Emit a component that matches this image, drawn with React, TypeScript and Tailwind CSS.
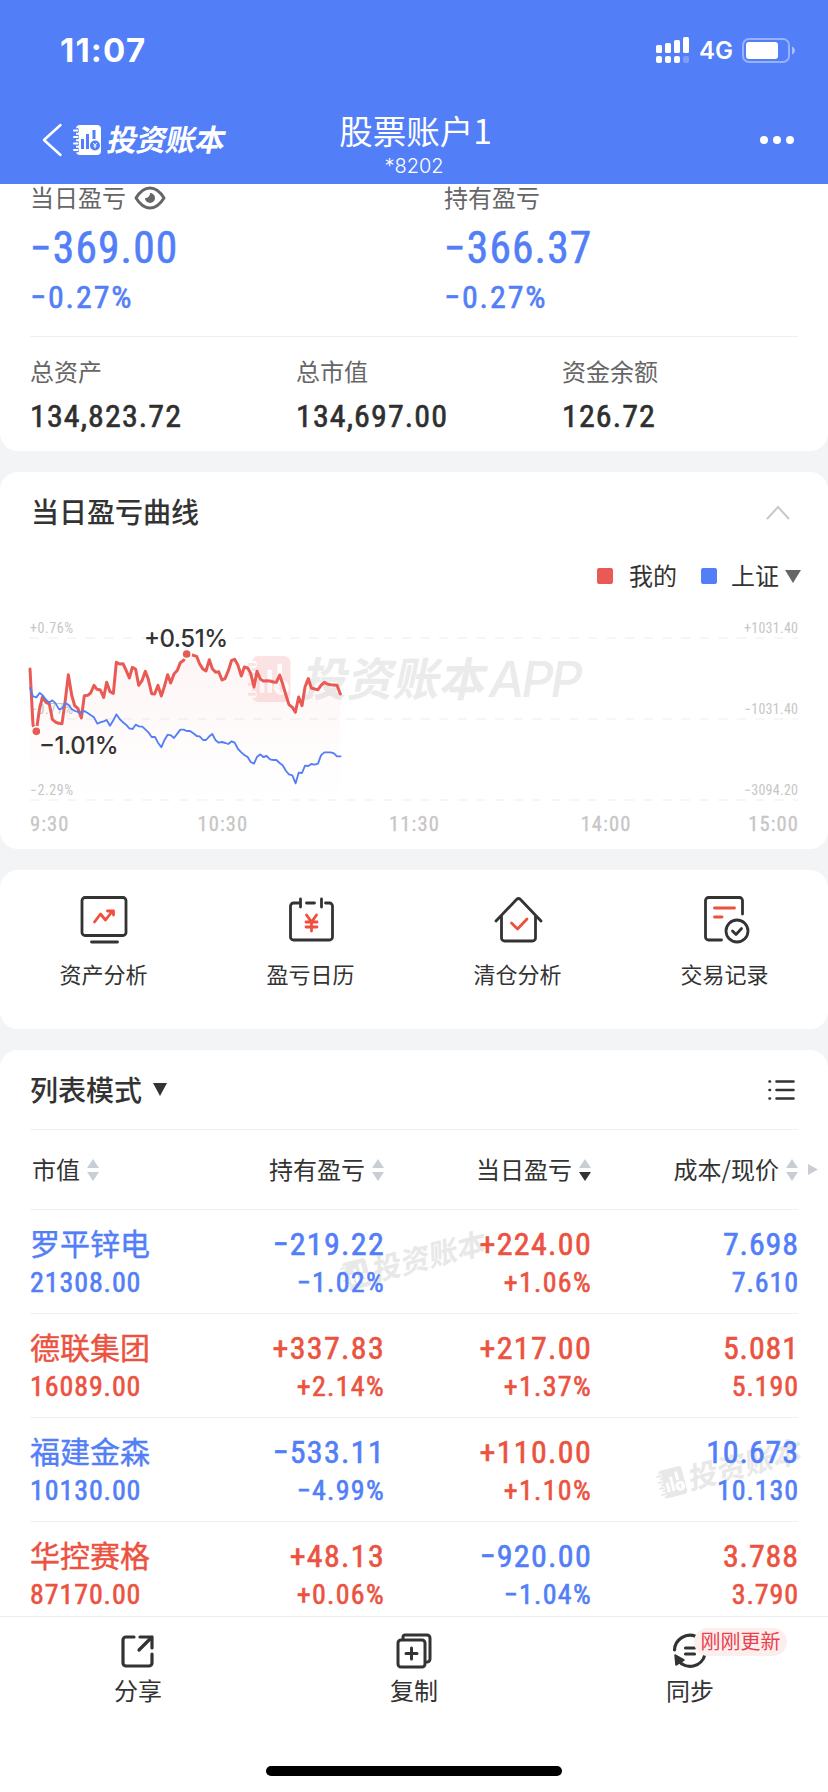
import React from 'react';

type Tone = 'up' | 'down';

interface Holding {
  name: string;
  value: string;
  tone: Tone;
  hold: [string, string, Tone];
  today: [string, string, Tone];
  price: [string, string];
}

const holdings: Holding[] = [
  { name: '罗平锌电', value: '21308.00', tone: 'down', hold: ['−219.22', '−1.02%', 'down'], today: ['+224.00', '+1.06%', 'up'], price: ['7.698', '7.610'] },
  { name: '德联集团', value: '16089.00', tone: 'up', hold: ['+337.83', '+2.14%', 'up'], today: ['+217.00', '+1.37%', 'up'], price: ['5.081', '5.190'] },
  { name: '福建金森', value: '10130.00', tone: 'down', hold: ['−533.11', '−4.99%', 'down'], today: ['+110.00', '+1.10%', 'up'], price: ['10.673', '10.130'] },
  { name: '华控赛格', value: '87170.00', tone: 'up', hold: ['+48.13', '+0.06%', 'up'], today: ['−920.00', '−1.04%', 'down'], price: ['3.788', '3.790'] },
];

const toneClass: Record<Tone, string> = {
  up: 'text-[#ec5240]',
  down: 'text-[#527ef7]',
};

// narrow digits, a touch heavier than regular
const numClass = "font-['Roboto'] font-normal [font-stretch:75%] [-webkit-text-stroke:0.6px_currentColor]";

const minePoints =
  '90,177 99,345 109,364 118,300 127,262 138,277 148,282 157,328 166,336 176,340 186,341 196,270 205,194 215,255 224,287 234,296 244,324 253,257 263,256 272,249 282,226 291,238 301,240 311,262 320,217 330,245 340,250 349,157 359,162 369,161 378,180 388,204 397,172 407,178 416,226 426,212 436,184 445,208 455,251 464,252 474,226 484,258 493,230 503,194 512,219 522,192 532,181 541,158 551,151 560,132 570,134 580,136 590,139 599,162 608,176 618,183 628,149 637,176 647,187 656,185 666,210 675,206 685,182 695,151 704,148 714,166 724,198 733,171 743,174 752,190 762,231 771,184 781,207 790,213 800,212 810,213 820,216 829,217 839,195 848,222 858,256 867,284 877,292 886,307 896,261 906,287 915,231 925,206 934,234 944,237 954,239 963,226 973,217 982,222 992,224 1002,225 1011,226 1021,252';

const marketPoints =
  '90,234 99,259 109,262 119,249 128,256 137,268 147,278 157,271 167,280 177,298 187,295 196,279 206,285 215,297 225,303 234,306 244,308 253,303 263,309 273,316 282,322 292,341 301,337 311,334 320,330 330,347 340,331 349,313 359,327 369,337 378,344 388,355 398,357 407,344 417,349 427,350 436,358 446,368 455,381 465,381 474,398 484,412 493,391 503,374 513,376 522,384 532,371 541,359 551,359 560,363 570,363 580,370 590,378 599,379 609,390 618,390 628,379 637,372 647,391 656,398 666,396 676,399 685,402 695,394 704,398 714,417 724,427 733,435 743,441 752,456 762,461 771,441 781,433 790,441 800,438 810,448 820,450 829,450 839,459 848,466 858,483 867,493 877,496 887,520 896,488 906,489 915,467 925,468 934,462 944,464 954,461 963,436 973,427 982,427 992,427 1002,430 1011,439 1022,439';

const BookLogo: React.FC<{ className?: string; hole: string }> = ({ className, hole }) => (
  <svg viewBox="0 0 28 30" className={className}>
    <rect x="3" y="0" width="25" height="30" rx="4" fill="currentColor" />
    {[5.5, 12, 18.5, 25].map(y => (
      <g key={y}>
        <rect x="2.5" y={y - 2.4} width="3.5" height="4.8" rx="2" fill={hole} />
        <rect x="0" y={y - 1} width="5.6" height="2" rx="1" fill="currentColor" />
      </g>
    ))}
    <path d="M9.5 14v10M14.5 9v15M21 5v9" stroke={hole} strokeWidth="3" />
    <circle cx="22" cy="20.5" r="5" fill={hole} />
    <path d="M20.3 18l1.7 2.4 1.7-2.4M22 20.4v3M20.4 21h3.2" stroke="currentColor" strokeWidth="1" fill="none" />
  </svg>
);

const BrandName: React.FC<{ className?: string }> = ({ className = '' }) => (
  <span className={`inline-block -skew-x-12 font-bold whitespace-nowrap ${className}`}>投资账本</span>
);

const Watermark: React.FC<{ className?: string }> = ({ className = '' }) => (
  <div className={`absolute flex items-center gap-[5px] -rotate-[14.5deg] text-[#e8e8e8] ${className}`}>
    <BookLogo className="w-[27px] h-[29px]" hole="#fff" />
    <BrandName className="text-[29px] leading-[30px] pb-[3px]" />
  </div>
);

const SortIcon: React.FC<{ active?: boolean }> = ({ active }) => (
  <svg width="12" height="22" viewBox="0 0 12 22">
    <path d="M6 0l6 9H0z" fill="#c8ced4" />
    <path d="M6 22l6-9H0z" fill={active ? '#333' : '#c8ced4'} />
  </svg>
);

const StatusBar = () => (
  <div className="h-[98px] flex items-center justify-between pl-[60px] pr-[33px] pt-[2px]">
    <span className="font-['Inter'] font-bold text-[33px] leading-none tracking-[1.2px]">11:07</span>
    <div className="flex items-center">
      <svg width="33" height="26" viewBox="0 0 33 26" fill="#fff">
        <rect x="0" y="8" width="6" height="8" rx="1.5" />
        <rect x="9" y="6" width="6" height="10" rx="1.5" />
        <rect x="18" y="3" width="6" height="13" rx="1.5" />
        <rect x="27" y="0" width="6" height="16" rx="1.5" />
        <rect x="0" y="19" width="6" height="7" rx="2" />
        <rect x="9" y="19" width="6" height="7" rx="2" />
        <rect x="18" y="19" width="6" height="7" rx="2" />
        <rect x="27" y="19" width="6" height="7" rx="2" opacity=".25" />
      </svg>
      <span className="ml-[10px] w-[43px] font-['Inter'] font-semibold text-[24px] leading-none pt-[2px]">4G</span>
      <svg width="53" height="25" viewBox="0 0 53 25">
        <rect x="1" y="1" width="46" height="23" rx="6" fill="none" stroke="#fff" strokeOpacity=".4" strokeWidth="2" />
        <rect x="4" y="4" width="32" height="17" rx="3" fill="#fff" />
        <path d="M50 8.5c4 1.5 4 6.500 0 8z" fill="#fff" opacity=".5" />
      </svg>
    </div>
  </div>
);

const Header = () => (
  <header className="h-[184px] bg-[#527ef7] text-white">
    <StatusBar />
    <div className="h-[86px] grid grid-cols-3">
      <div className="flex items-center pl-[41px] pb-[2px]">
        <svg width="22" height="34" viewBox="0 0 22 34" fill="none" stroke="#fff" strokeWidth="2.5" strokeLinecap="round" strokeLinejoin="round">
          <path d="M19.500 2L3 17l16.500 15" />
        </svg>
        <BookLogo className="w-[28px] h-[30px] ml-[10px]" hole="#527ef7" />
        <BrandName className="text-[30px] leading-none ml-[7px] pb-[4px] tracking-[-0.7px]" />
      </div>
      <div className="flex flex-col items-center pt-[12px]">
        <h1 className="text-[33.500px] leading-[40px] font-normal pl-[3px]">股票账户1</h1>
        <span className="font-['Inter'] font-light text-[20px] leading-[24px] mt-[4px]">*8202</span>
      </div>
      <div className="flex items-center justify-end gap-[5px] pr-[34px] pb-[2px]">
        <i className="size-2 rounded-full bg-white" />
        <i className="size-2 rounded-full bg-white" />
        <i className="size-2 rounded-full bg-white" />
      </div>
    </div>
  </header>
);

const Profit: React.FC<{ label: string; value: string; rate: string; eye?: boolean }> = ({ label, value, rate, eye }) => (
  <div className="text-[#527ef7]">
    <div className="flex items-center h-[28px] text-[24px] text-[#666]">
      <span className="pb-[3px]">{label}</span>
      {eye && (
        <svg width="32" height="24" viewBox="0 0 32 24" className="ml-[8px]" fill="none" stroke="#666">
          <path d="M2 12C6 5.500 10.500 2 16 2s10 3.500 14 10c-4 6.500-8.500 10-14 10S6 18.500 2 12z" strokeWidth="3" strokeLinejoin="round" />
          <path d="M16 7a5 5 0 1 1-5 5c3 0 5-1.500 5-5z" fill="#666" stroke="none" />
        </svg>
      )}
    </div>
    <div className={`${numClass} text-[43.500px] leading-[52px] mt-[11px] tracking-[1.1px]`}>{value}</div>
    <div className={`${numClass} text-[32px] leading-[36px] mt-[4px] tracking-[1.9px]`}>{rate}</div>
  </div>
);

const Total: React.FC<{ label: string; value: string }> = ({ label, value }) => (
  <div>
    <div className="text-[24px] leading-[30px] text-[#666]">{label}</div>
    <div className={`${numClass} text-[32px] leading-[36px] mt-[12px] tracking-[1.1px] text-[#2f2f2f]`}>{value}</div>
  </div>
);

const Summary = () => (
  <section className="h-[267px] bg-white rounded-b-[18px] px-[30px]">
    <div className="grid grid-cols-2 gap-[60px] h-[153px] border-b border-[#efefef]">
      <Profit label="当日盈亏" value="−369.00" rate="−0.27%" eye />
      <Profit label="持有盈亏" value="−366.37" rate="−0.27%" />
    </div>
    <div className="flex pt-[19px] [&>div]:w-[266px] [&>div]:shrink-0">
      <Total label="总资产" value="134,823.72" />
      <Total label="总市值" value="134,697.00" />
      <Total label="资金余额" value="126.72" />
    </div>
  </section>
);

const Chart = () => (
  <div className="relative h-[202px]">
    <div className="absolute left-[247px] top-[43px] flex items-center text-[#ebebeb]">
      <BookLogo className="w-[44px] h-[46px] text-[#fbe3e3]" hole="#fff" />
      <BrandName className="text-[46px] leading-[46px] ml-[13px] pb-[5px]" />
      <span className="ml-[1px] font-['Inter'] italic font-medium text-[50px] leading-[46px] tracking-[-3px]">APP</span>
    </div>
    <svg width="828" height="202" viewBox="0 0 828 202" className="relative block">
      <defs>
        <linearGradient id="mineFill" x1="0" y1="40" x2="0" y2="190" gradientUnits="userSpaceOnUse">
          <stop offset="0" stopColor="#e85a53" stopOpacity=".06" />
          <stop offset="1" stopColor="#e85a53" stopOpacity="0" />
        </linearGradient>
      </defs>
      <g stroke="#f3f3f3" strokeWidth="1.500" strokeDasharray="9.300 9.300">
        <path d="M30 28h768M30 109h768M30 190h768" />
      </g>
      <g fontFamily="Roboto" fontSize="14" fill="#c6c6c6" className="[font-stretch:75%]">
        <text x="30" y="23" textLength="43">+0.76%</text>
        <text x="30" y="104" textLength="43">−0.77%</text>
        <text x="30" y="185" textLength="43">−2.29%</text>
        <g textAnchor="end">
          <text x="798" y="23" textLength="54">+1031.40</text>
          <text x="798" y="104" textLength="54">−1031.40</text>
          <text x="798" y="185" textLength="54">−3094.20</text>
        </g>
      </g>
      <polygon points={`30,190 ${minePoints.split(' ').map(p => p.split(',').map(n => Number(n) / 3).join(',')).join(' ')} 340.500,190`} fill="url(#mineFill)" />
      <g transform="scale(.33333)" fill="none" strokeLinejoin="round" strokeLinecap="round">
        <polyline points={minePoints} stroke="#e85a53" strokeWidth="9" />
        <polyline points={marketPoints} stroke="#527ef7" strokeWidth="5.500" />
        <g fill="#e85a53" stroke="#fff" strokeWidth="5">
          <circle cx="109" cy="364" r="14" />
          <circle cx="560" cy="132" r="14" />
        </g>
      </g>
      <g fontFamily="Inter" fontSize="24" fontWeight="500" fill="#333">
        <text x="144" y="36.500" textLength="84">+0.51%</text>
        <text x="39" y="144" textLength="79.500">−1.01%</text>
      </g>
    </svg>
  </div>
);

const CurveCard = () => (
  <section className="h-[377px] mt-[21px] bg-white rounded-[18px] overflow-hidden">
    <div className="h-[80px] flex items-center justify-between pl-[31px] pr-[38px]">
      <h2 className="text-[28px] font-medium pb-[2px]">当日盈亏曲线</h2>
      <svg width="24" height="15" viewBox="0 0 24 15" fill="none" stroke="#c8c8c8" strokeWidth="2">
        <path d="M1 14L12 2l11 12" />
      </svg>
    </div>
    <div className="h-[58px] flex items-center justify-end pr-[27px] pb-[10px] text-[24px]">
      <i className="size-4 rounded-[2px] bg-[#e85a53]" />
      <span className="ml-[16px] pb-[3px]">我的</span>
      <i className="size-4 rounded-[2px] bg-[#527ef7] ml-[24px]" />
      <span className="ml-[14px] pb-[3px]">上证</span>
      <svg width="16" height="13" viewBox="0 0 16 13" className="ml-[6px]">
        <path d="M0 0h16L8 13z" fill="#666" />
      </svg>
    </div>
    <Chart />
    <div className="flex justify-between pl-[30px] pr-[29px] font-['Roboto'] [font-stretch:75%] [-webkit-text-stroke:0.3px_currentColor] tracking-[1.1px] text-[20.500px] leading-[24px] text-[#c6c6c6]">
      <span className="w-[72px]">9:30</span>
      <span className="w-[96px]">10:30</span>
      <span>11:30</span>
      <span className="w-[96px] text-right">14:00</span>
      <span className="w-[72px] text-right">15:00</span>
    </div>
  </section>
);

const tools = [
  {
    label: '资产分析',
    icon: (
      <>
        <rect x="1.500" y="2.500" width="44" height="38" rx="3" />
        <path d="M11 47h26" />
        <path d="M14 27l6-8 5 6 7-9M27 16h6v4" stroke="#f04f3e" />
      </>
    ),
  },
  {
    label: '盈亏日历',
    icon: (
      <>
        <path d="M11 8H6a3 3 0 0 0-3 3v31a3 3 0 0 0 3 3h36a3 3 0 0 0 3-3V11a3 3 0 0 0-3-3h-4M19 8h8M13 4v8M34 4v8" />
        <path d="M19 20l5 7 5-7M18.500 27h11M18.500 32h11M24 27v9" stroke="#f04f3e" />
      </>
    ),
  },
  {
    label: '清仓分析',
    icon: (
      <>
        <path d="M1.500 26L22 4.500q2-2 4 0L46.500 26M7 21v22a3 3 0 0 0 3 3h28a3 3 0 0 0 3-3V21" />
        <path d="M17 28l6 6 9.500-10" stroke="#f04f3e" />
      </>
    ),
  },
  {
    label: '交易记录',
    icon: (
      <>
        <path d="M20 45H7a3 3 0 0 1-3-3V5.500a3 3 0 0 1 3-3h31a3 3 0 0 1 3 3V19" />
        <circle cx="35.500" cy="36" r="11" />
        <path d="M31 36l3.500 3.500 5.500-6" />
        <path d="M13 13h20M13 22h7.500" stroke="#f04f3e" />
      </>
    ),
  },
];

const Tools = () => (
  <section className="h-[159px] mt-[21px] bg-white rounded-[18px] grid grid-cols-4 pt-[25px]">
    {tools.map(tool => (
      <div key={tool.label} className="flex flex-col items-center">
        <svg width="49" height="49" viewBox="0 0 48 49" fill="none" stroke="#333" strokeWidth="2.800" strokeLinecap="round" strokeLinejoin="round" className="translate-x-px">
          {tool.icon}
        </svg>
        <span className="text-[22px] leading-[30px] mt-[14px]">{tool.label}</span>
      </div>
    ))}
  </section>
);

const HeadCell: React.FC<{ label: string; active?: boolean; more?: boolean }> = ({ label, active, more }) => (
  <div className="relative flex items-center justify-end gap-[7px] [&:first-child]:justify-start [&:first-child]:pl-[2px]">
    <span className="whitespace-nowrap pb-[2px]">{label}</span>
    <SortIcon active={active} />
    {more && (
      <svg width="10" height="11" viewBox="0 0 10 11" className="absolute -right-[20px]">
        <path d="M0 0l10 5.500L0 11z" fill="#c8ced4" />
      </svg>
    )}
  </div>
);

const Cell: React.FC<{ top: string; bottom: string; tone: Tone; price?: boolean }> = ({ top, bottom, tone, price }) => (
  <div className={`-mr-px text-right ${numClass} ${price ? 'tracking-[0.9px]' : 'tracking-[1.3px]'} ${toneClass[tone]}`}>
    <div className="text-[32px] leading-[44px]">{top}</div>
    <div className="text-[28px] leading-[34px]">{bottom}</div>
  </div>
);

const HoldingList = () => (
  <section className="relative h-[566px] mt-[21px] bg-white rounded-t-[18px] px-[30px] overflow-hidden">
    <div className="h-[80px] flex items-center justify-between border-b border-[#efefef] pr-[3px]">
      <h2 className="flex items-center text-[28px] font-medium">
        <span className="pb-[2px]">列表模式</span>
        <svg width="14" height="13" viewBox="0 0 14 13" className="ml-[11px]">
          <path d="M0 0h14L7 13z" fill="#333" />
        </svg>
      </h2>
      <svg width="27" height="22" viewBox="0 0 27 22" stroke="#333" strokeWidth="2.600" strokeLinecap="round">
        <path d="M1.500 2.500h.5M8.500 2.500h17M1.500 11h.5M8.500 11h17M1.500 19.500h.5M8.500 19.500h17" />
      </svg>
    </div>
    <div className="h-[80px] grid grid-cols-[148px_206px_207px_207px] border-b border-[#efefef] text-[24px]">
      <HeadCell label="市值" />
      <HeadCell label="持有盈亏" />
      <HeadCell label="当日盈亏" active />
      <HeadCell label="成本/现价" more />
    </div>
    <Watermark className="left-[340px] top-[193px]" />
    <Watermark className="left-[656px] top-[401px]" />
    {holdings.map(h => (
      <div key={h.name} className="relative h-[104px] pt-[12px] grid grid-cols-[148px_206px_207px_207px] border-b border-[#efefef]">
        <div className={toneClass[h.tone]}>
          <div className="text-[30px] leading-[44px] -mt-[2px] mb-[2px] whitespace-nowrap [-webkit-text-stroke:0.4px_currentColor]">{h.name}</div>
          <div className={`${numClass} text-[28px] leading-[34px] tracking-[0.9px]`}>{h.value}</div>
        </div>
        <Cell top={h.hold[0]} bottom={h.hold[1]} tone={h.hold[2]} />
        <Cell top={h.today[0]} bottom={h.today[1]} tone={h.today[2]} />
        <Cell top={h.price[0]} bottom={h.price[1]} tone={h.tone} price />
      </div>
    ))}
  </section>
);

const TabBar = () => (
  <footer className="relative h-[176px] bg-white border-t border-[#ececec] flex flex-col items-center justify-between pb-[16px]">
    <div className="w-full grid grid-cols-3 pt-[15px] text-[24px] leading-[30px]">
      <div className="flex flex-col items-center gap-[5px]">
        <svg width="36" height="38" viewBox="0 0 36 38" fill="none" stroke="#333" strokeWidth="3.200" strokeLinecap="round" strokeLinejoin="round">
          <path d="M14 5H6a3 3 0 0 0-3 3v23a3 3 0 0 0 3 3h23a3 3 0 0 0 3-3V22M20 5h12v11M32 5L19 18" />
        </svg>
        分享
      </div>
      <div className="flex flex-col items-center gap-[5px]">
        <svg width="36" height="38" viewBox="0 0 36 38" fill="none" stroke="#333" strokeWidth="3" strokeLinecap="round" strokeLinejoin="round">
          <rect x="2" y="8" width="27" height="27" rx="3" />
          <path d="M7 7V5a2 2 0 0 1 2-2h22a3 3 0 0 1 3 3v21a3 3 0 0 1-3 3M15.500 16v11M10 21.500h11" />
        </svg>
        复制
      </div>
      <div className="relative flex flex-col items-center gap-[5px]">
        <svg width="36" height="38" viewBox="0 0 36 38" fill="none" stroke="#333" strokeWidth="3.200" strokeLinecap="round">
          <path d="M2.500 18A15.500 15.500 0 0 1 24 4.500M6 28a15 15 0 0 0 27-6M13.500 16h9M13.500 22h9" />
          <path d="M3 23l1 10 8-5z" fill="#333" strokeWidth="1.500" strokeLinejoin="round" />
        </svg>
        同步
        <span className="absolute left-[142px] -top-[4px] h-[28px] w-[93px] rounded-full bg-[#fdeeee] text-center text-[20px] leading-[25px] text-[#ea404c]">刚刚更新</span>
      </div>
    </div>
    <div className="w-[296px] h-[10px] rounded-full bg-black" />
  </footer>
);

const App: React.FC = () => (
  <div className="w-[828px] h-[1792px] overflow-hidden bg-[#f3f4f6] text-[#333] font-['Noto_Sans_CJK_SC',sans-serif]">
    <Header />
    <Summary />
    <CurveCard />
    <Tools />
    <HoldingList />
    <TabBar />
  </div>
);

export default App;
